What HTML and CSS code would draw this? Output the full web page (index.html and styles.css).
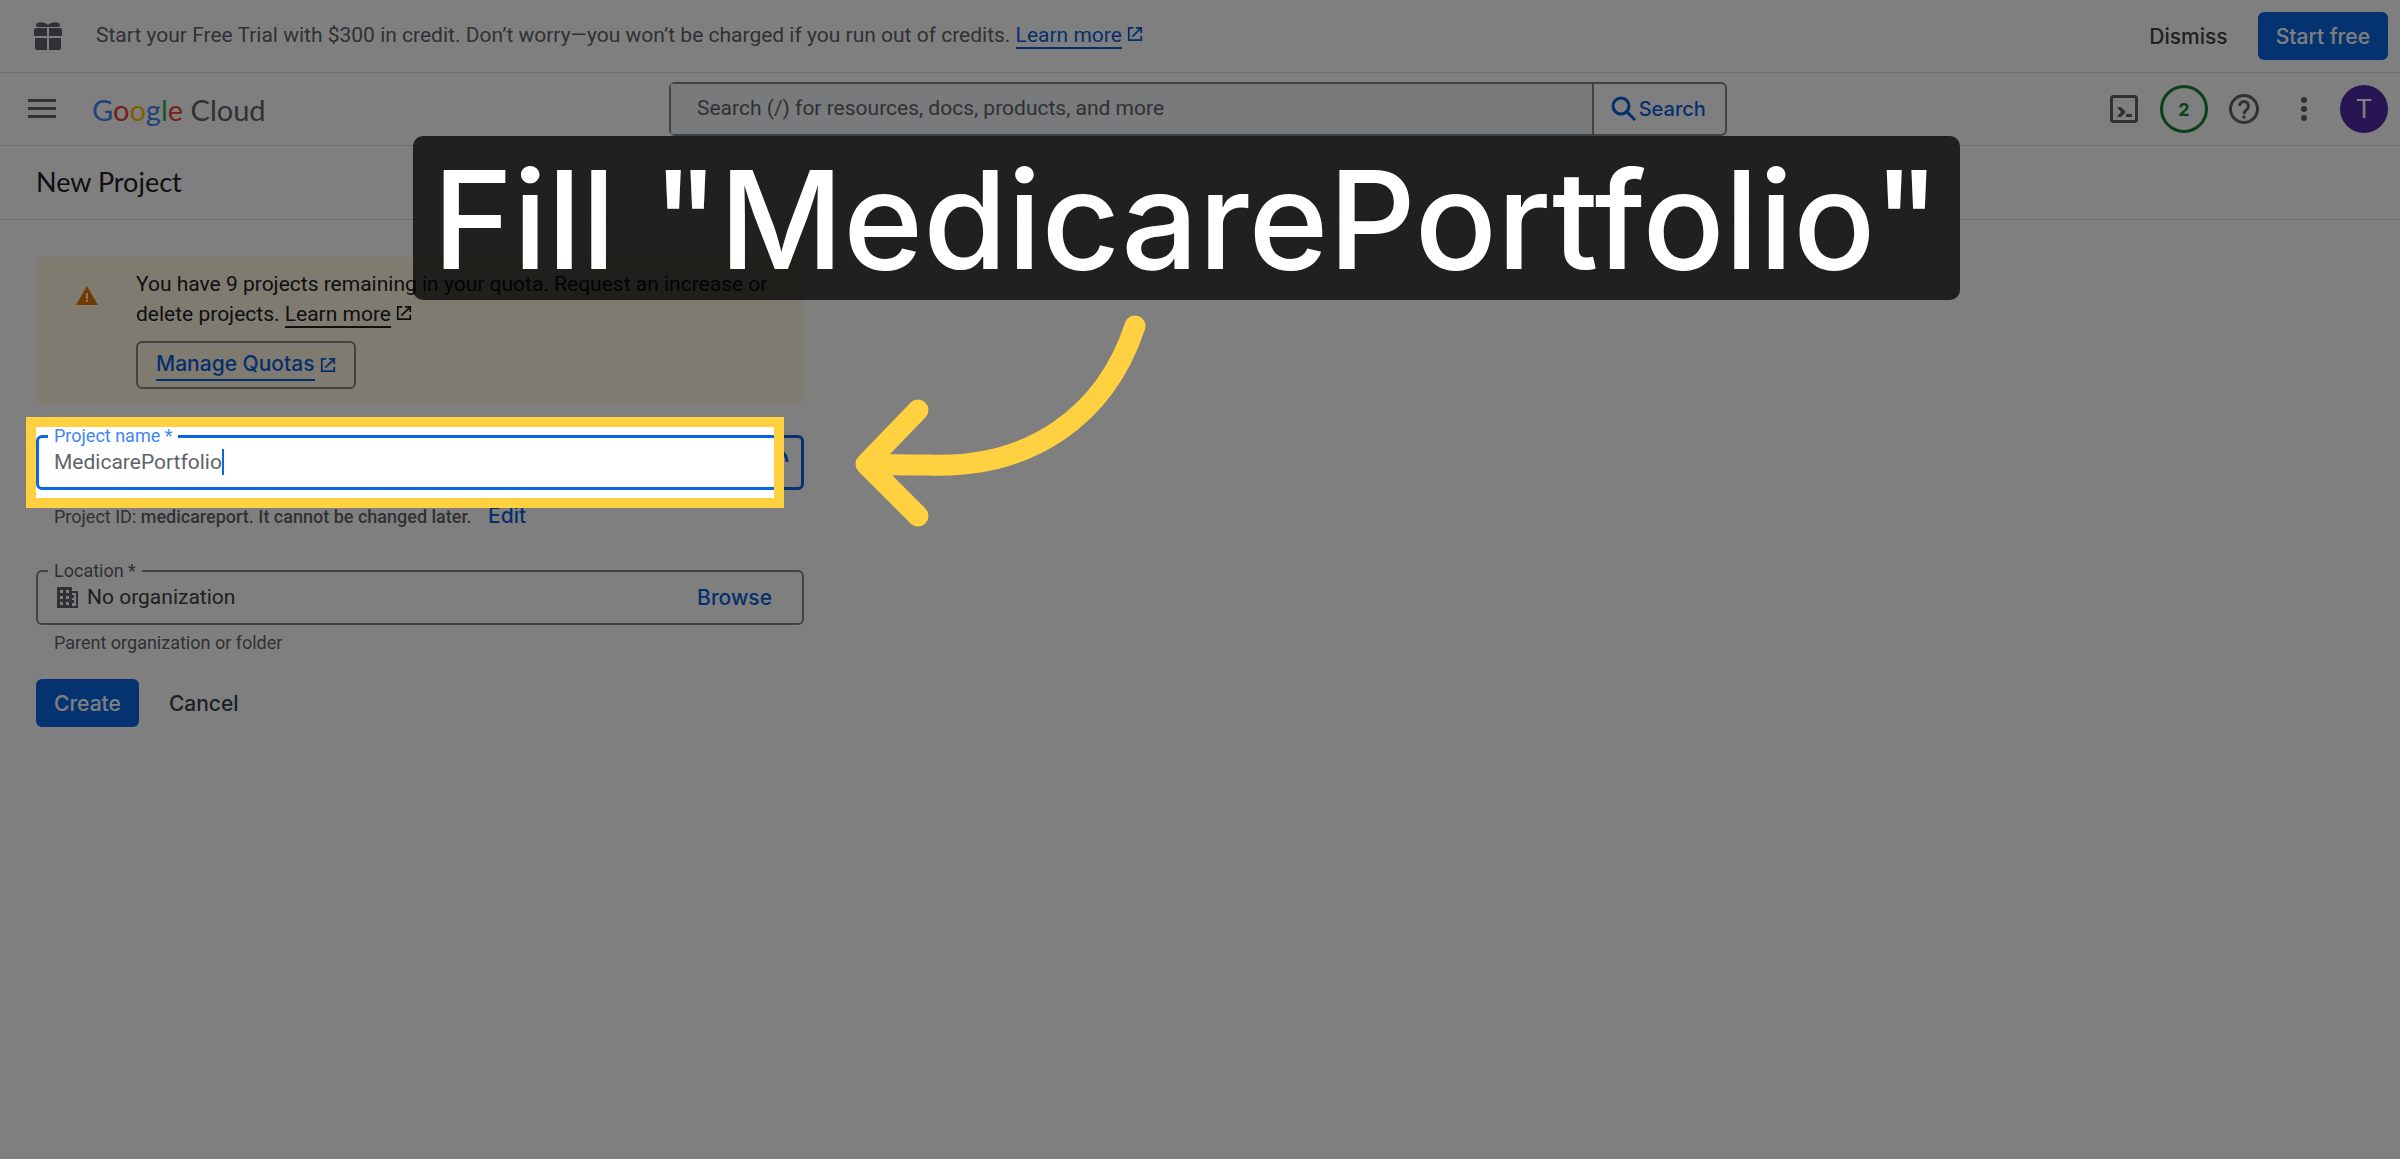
FILE: index.html
```html
<!DOCTYPE html>
<html lang="en">
<head>
  <meta charset="UTF-8">
  <meta name="viewport" content="width=device-width, initial-scale=1.0">
  <title>New Project - Google Cloud</title>
  <link rel="stylesheet" href="styles.css">
</head>
<body>
  <!-- Reusable icon -->
  <svg class="sprite" aria-hidden="true">
    <symbol id="launch" viewBox="0 0 18 18">
      <path d="M7 2H2v14h14v-5M10 2h6v6M16 2L6 12" fill="none" stroke="currentColor" stroke-width="2"/>
    </symbol>
  </svg>

  <div class="promo">
    <svg class="gift" viewBox="0 0 28 28" fill="currentColor" aria-hidden="true">
      <path d="M14 3C11 0 3-1 2 3c0 1 1 2 2 2h20c1 0 2-1 2-2-1-4-9-3-12 0zM2 6h11v8H0V8q0-2 2-2zM15 6h11q2 0 2 2v6H15zM1 16h12v12H3q-2 0-2-2zM15 16h12v10q0 2-2 2H15z"/>
    </svg>
    <p class="promo-text">Start your Free Trial with $300 in credit. Don’t worry—you won’t be charged if you run out of credits. <a class="link" href="#">Learn more</a><svg class="launch blue"><use href="#launch"/></svg></p>
    <button class="btn">Dismiss</button>
    <button class="btn btn-primary">Start free</button>
  </div>

  <header class="topbar">
    <button class="icon-btn" aria-label="Main menu">
      <svg width="28" height="20" viewBox="0 0 28 20" fill="currentColor"><path d="M0 0h28v3H0zM0 8h28v3H0zM0 16h28v3H0z"/></svg>
    </button>
    <a class="logo" href="#"><span class="g-blue">G</span><span class="g-red">o</span><span class="g-yellow">o</span><span class="g-blue">g</span><span class="g-green">l</span><span class="g-red">e</span> Cloud</a>
    <form class="search">
      <input type="text" aria-label="Search" placeholder="Search (/) for resources, docs, products, and more">
      <button type="button">
        <svg width="26" height="26" viewBox="0 0 26 26" fill="none" stroke="currentColor" stroke-width="3"><circle cx="10" cy="10" r="8"/><path d="M15 15l9 9"/></svg>
        Search
      </button>
    </form>
    <div class="tools">
      <button class="icon-btn" aria-label="Cloud Shell">
        <svg width="28" height="28" viewBox="0 0 28 28"><rect x="1.500" y="1.500" width="25" height="25" rx="2" fill="none" stroke="currentColor" stroke-width="3"/><path d="M7 12h4l5 5-5 5H7l4-5zM16 19h6v3h-6z" fill="currentColor"/></svg>
      </button>
      <button class="badge" aria-label="Notifications">2</button>
      <button class="icon-btn" aria-label="Help">
        <svg width="30" height="30" viewBox="0 0 30 30" fill="none" stroke="currentColor" stroke-width="3"><circle cx="15" cy="15" r="13.500"/><path d="M10.500 12a4.500 4.500 0 1 1 7.500 3.400c-2 1.500-3 2.300-3 4.600M15 21.500v3"/></svg>
      </button>
      <button class="icon-btn" aria-label="More">
        <svg width="30" height="26" viewBox="0 0 30 26" fill="currentColor"><circle cx="15" cy="4" r="3"/><circle cx="15" cy="13" r="3"/><circle cx="15" cy="22" r="3"/></svg>
      </button>
      <button class="avatar" aria-label="Account">T</button>
    </div>
  </header>

  <h1 class="page-title">New Project</h1>

  <main class="content">
    <section class="quota">
      <svg class="warning" viewBox="0 0 22 19" aria-hidden="true"><path d="M11 0l11 19H0z" fill="#e37400"/><path d="M10 7h2v6h-2zM10 14h2v2h-2z" fill="#fef7e0"/></svg>
      <div>
        <p>You have 9 projects remaining in your quota. Request an increase or delete projects. <a class="link link-dark" href="#">Learn more</a><svg class="launch"><use href="#launch"/></svg></p>
        <a class="btn btn-outline" href="#"><span>Manage Quotas</span><svg class="launch"><use href="#launch"/></svg></a>
      </div>
    </section>

    <form>
      <div class="field-wrap">
        <fieldset class="field active">
          <legend><label for="project-name">Project name *</label></legend>
          <input type="text" id="project-name" value="MedicarePortfolio" size="15">
          <span class="caret"></span>
          <svg class="spinner" width="30" height="30" viewBox="0 0 30 30" aria-hidden="true"><path d="M15 2a13 13 0 0 1 13 13" fill="none" stroke="currentColor" stroke-width="3"/></svg>
        </fieldset>
        <!-- Highlight frame, its shadow dims the rest of the page -->
        <div class="highlight"></div>
      </div>
      <p class="hint">Project ID: <strong>medicareport. It cannot be changed later.</strong> <button type="button" class="text-btn">Edit</button></p>

      <fieldset class="field location">
        <legend><label for="location">Location *</label></legend>
        <svg class="org" viewBox="0 0 21 21" aria-hidden="true"><path fill="currentColor" fill-rule="evenodd" d="M0 0h15v4h6v17H0zM3 3v3h3V3zM9 3v3h3V3zM3 9v3h3V9zM9 9v3h3V9zM3 15v3h3v-3zM9 15v3h3v-3zM15 6v2h2v3h-2v2h2v3h-2v3h4V6z"/></svg>
        <input type="text" id="location" value="No organization" readonly>
        <button type="button" class="text-btn">Browse</button>
      </fieldset>
      <p class="hint">Parent organization or folder</p>

      <div class="actions">
        <button type="button" class="btn btn-primary">Create</button>
        <button type="button" class="btn">Cancel</button>
      </div>
    </form>
  </main>

  <!-- Step callout -->
  <div class="callout">Fill "MedicarePortfolio"</div>
  <svg class="arrow" viewBox="0 0 300 220" aria-hidden="true">
    <path d="M280 11C250 102 174 154 74 150Q40 150 11 149M63 95L11 149L63 201" fill="none" stroke="#ffd040" stroke-width="21" stroke-linecap="round" stroke-linejoin="round"/>
  </svg>
</body>
</html>
```
FILE: styles.css
```css
/* General Reset */
* {
  box-sizing: border-box;
}

body, h1, p, fieldset, legend, input, button {
  margin: 0;
  padding: 0;
}

body {
  position: relative;
  min-height: 100vh;
  overflow: hidden;
  background-color: #ffffff;
  color: #202124;
  font-family: Roboto, sans-serif;
  font-size: 21px;
}

button, input {
  border: none;
  background: none;
  color: inherit;
  font: inherit;
}

input {
  outline: none;
}

button {
  cursor: pointer;
}

.sprite {
  position: absolute;
  width: 0;
  height: 0;
}

/* Buttons and links */
.btn {
  display: inline-flex;
  align-items: center;
  height: 48px;
  padding: 0 18px;
  border-radius: 6px;
  color: #3c4043;
  font-family: Inter, sans-serif;
  font-weight: 500;
  font-size: 21px;
}

.btn-primary {
  background-color: #0b66e4;
  color: #ffffff;
}

.btn-outline {
  margin-top: 12px;
  border: 2px solid #80868b;
  color: #0b5fd8;
  text-decoration: none;
}

.btn-outline span {
  border-bottom: 2px solid;
}

.text-btn {
  color: #0b5fd8;
  font-family: Inter, sans-serif;
  font-weight: 500;
  font-size: 21px;
}

.link {
  color: #0b5fd8;
  text-decoration: none;
  border-bottom: 2px solid;
}

.link-dark {
  color: inherit;
}

.launch {
  width: 16px;
  height: 16px;
  margin-left: 5px;
}

.blue {
  color: #0b5fd8;
}

/* Promo bar */
.promo {
  display: flex;
  align-items: center;
  height: 73px;
  padding: 0 12px 0 34px;
  border-bottom: 1px solid #dadce0;
  color: #5f6368;
}

.gift {
  width: 28px;
  height: 28px;
}

.promo-text {
  flex: 1;
  margin-left: 34px;
  padding-bottom: 2px;
}

.promo .btn-primary {
  margin-left: 12px;
}

/* Top bar */
.topbar {
  display: grid;
  grid-template-columns: 64px 577px 8fr 5fr;
  align-items: center;
  height: 73px;
  padding: 0 12px 0 28px;
  border-bottom: 1px solid #dadce0;
  color: #5f6368;
}

.icon-btn {
  display: flex;
  align-items: center;
}

.logo {
  color: #5f6368;
  font-family: Lato, sans-serif;
  font-size: 29px;
  text-decoration: none;
}

.g-blue { color: #4285f4; }
.g-red { color: #ea4335; }
.g-yellow { color: #fbbc04; }
.g-green { color: #34a853; }

.search {
  display: flex;
  height: 54px;
  border: 2px solid #80868b;
  border-radius: 6px;
}

.search input {
  flex: 1;
  padding: 0 26px 2px;
  background-color: #f1f4f6;
}

.search input::placeholder {
  color: #5f6368;
}

.search button {
  display: flex;
  align-items: center;
  gap: 2px;
  padding: 0 19px 0 17px;
  border-left: 2px solid #80868b;
  color: #0b5fd8;
  font-family: Inter, sans-serif;
  font-weight: 500;
  font-size: 20px;
}

.tools {
  display: grid;
  grid-template-columns: repeat(5, 60px);
  align-items: center;
  justify-content: end;
  justify-items: center;
  margin-right: -6px;
}

.badge, .avatar {
  width: 48px;
  height: 48px;
  border-radius: 50%;
}

.badge {
  border: 3px solid #188038;
  color: #188038;
  font-family: Inter, sans-serif;
  font-weight: 700;
  font-size: 18px;
}

.avatar {
  background-color: #512da8;
  color: #ffffff;
  font-size: 26px;
}

.page-title {
  height: 74px;
  padding: 0 36px;
  border-bottom: 1px solid #dadce0;
  font-family: Lato, sans-serif;
  font-weight: 400;
  font-size: 27px;
  line-height: 72px;
}

/* Content */
.content {
  width: 32%;
  margin: 37px 0 0 36px;
}

.quota {
  display: grid;
  grid-template-columns: 22px 1fr;
  gap: 38px;
  height: 147px;
  padding: 12px 24px 12px 40px;
  border-radius: 6px;
  background-color: #fef7e0;
  line-height: 30px;
}

.warning {
  width: 22px;
  margin-top: 17px;
}

.field-wrap {
  position: relative;
  margin-top: 23px;
}

.field {
  display: flex;
  align-items: center;
  height: 63px;
  padding: 0 30px 9px 16px;
  border: 2px solid #80868b;
  border-radius: 6px;
}

.field legend {
  padding: 0 6px;
  margin-left: -6px;
  color: #5f6368;
  font-size: 18px;
  line-height: 18px;
}

.field input {
  flex: 1;
  color: #3c4043;
}

.field.active {
  padding-left: 15px;
  padding-right: 12px;
  border: 3px solid #0b66e4;
}

.field.active legend {
  color: #4285f4;
}

.field.active input {
  flex: none;
  field-sizing: content;
  color: #5f6368;
}

.field.location {
  margin-top: 27px;
}

.caret {
  width: 2px;
  height: 26px;
  background-color: #0b66e4;
}

.spinner {
  margin-left: auto;
  color: #0b66e4;
}

.org {
  width: 21px;
  margin: 0 9px 0 3px;
  color: #5f6368;
}

.hint {
  margin: 8px 18px 0;
  color: #5f6368;
  font-size: 18px;
  line-height: 36px;
}

.location + .hint {
  margin-top: 0;
}

.hint strong {
  font-weight: 500;
}

.hint .text-btn {
  margin-left: 12px;
}

.actions {
  display: flex;
  gap: 12px;
  margin-top: 18px;
}

/* Overlays */
.highlight {
  position: absolute;
  top: -10px;
  left: -10px;
  right: 20px;
  height: 91px;
  border: 10px solid #ffd040;
  box-shadow: 0 0 0 3000px rgba(0, 0, 0, 0.5);
}

.callout {
  position: absolute;
  top: 136px;
  left: 413px;
  right: 440px;
  height: 164px;
  border-radius: 10px;
  background-color: rgba(0, 0, 0, 0.75);
  color: #ffffff;
  font-family: Inter, sans-serif;
  font-weight: 500;
  font-size: 136px;
  line-height: 168px;
  text-align: center;
  white-space: nowrap;
}

.arrow {
  position: absolute;
  top: 315px;
  left: 855px;
  width: 300px;
}
```
